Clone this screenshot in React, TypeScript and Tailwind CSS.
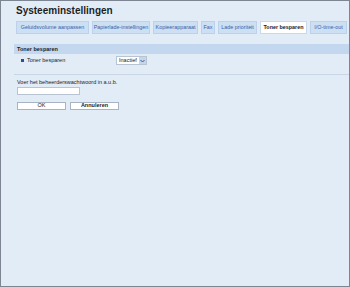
import React from 'react'

const tabs = [
  { label: 'Geluidsvolume aanpassen', w: 'w-[73px]' },
  { label: 'Papierlade-instellingen', w: 'w-[58px]' },
  { label: 'Kopieerapparaat', w: 'w-[45px]' },
  { label: 'Fax', w: 'w-[14px]' },
  { label: 'Lade prioriteit', w: 'w-[39px]' },
  { label: 'Toner besparen', w: 'w-[47px]' },
  { label: 'I/O-time-out', w: 'w-[37px]' },
]

export default function App() {
  return (
    <div
      className="w-[350px] h-[287px] overflow-hidden border border-[#7d8593] bg-[#e2ecf7] text-[#222]"
      style={{ fontFamily: '"Liberation Sans", Arial, sans-serif' }}
    >
      <div className="pl-[15px] pt-[4px]">
        <h1 className="text-[10px] font-bold leading-[12px] text-[#1e1e1e]">Systeeminstellingen</h1>
      </div>

      <div className="flex gap-[3px] pl-[15px] mt-[4px] whitespace-nowrap">
        {tabs.map((t) => (
          <div
            key={t.label}
            className={
              t.label === 'Toner besparen'
                ? `${t.w} shrink-0 h-[13px] flex items-center justify-center text-[5.4px] font-bold text-[#222] bg-white border border-[#c9d8ea]`
                : `${t.w} shrink-0 h-[13px] flex items-center justify-center text-[5.4px] text-[#3763a8] bg-[#cddff2] border border-[#bcd2ec]`
            }
          >
            {t.label}
          </div>
        ))}
        <div className="shrink-0 h-[13px] w-[6px] bg-[#cddff2] border border-[#bcd2ec]" />
      </div>

      <div className="ml-[13px] mt-[10px]">
        <div className="h-[10px] bg-[#c3d8ef] pl-[3px] flex items-center text-[5.5px] font-bold text-[#222]">
          Toner besparen
        </div>
        <div className="flex items-center h-[13px] pl-[7px]">
          <span className="w-[3px] h-[3px] bg-[#2b4f8f] mr-[3px]" />
          <span className="text-[5.5px] w-[89px]">Toner besparen</span>
          <div className="flex items-center h-[9px] bg-white border border-[#b8c4d2]">
            <span className="text-[5.5px] px-[2px]">Inactief</span>
            <span className="w-[7px] h-[7px] bg-[#c5d6ec] flex items-center justify-center">
              <svg width="5" height="4" viewBox="0 0 5 4">
                <path d="M0.5 1 L2.5 3 L4.5 1" stroke="#3a5a90" strokeWidth="1" fill="none" />
              </svg>
            </span>
          </div>
        </div>
        <div className="mt-[7px] border-t border-[#c9d6e6]" />
      </div>

      <div className="pl-[16px] mt-[4px]">
        <div className="text-[5.5px] leading-[7px]">Voer het beheerderswachtwoord in a.u.b.</div>
        <div className="mt-[1px] w-[63px] h-[8px] bg-white border border-[#b8c4d2]" />
        <div className="flex gap-[4px] mt-[7px]">
          <button className="w-[49px] h-[8px] bg-white border border-[#a8b4c4] text-[5.5px] leading-none flex items-center justify-center">
            OK
          </button>
          <button className="w-[49px] h-[8px] bg-white border border-[#a8b4c4] text-[5.5px] font-bold leading-none flex items-center justify-center">
            Annuleren
          </button>
        </div>
      </div>
    </div>
  )
}
